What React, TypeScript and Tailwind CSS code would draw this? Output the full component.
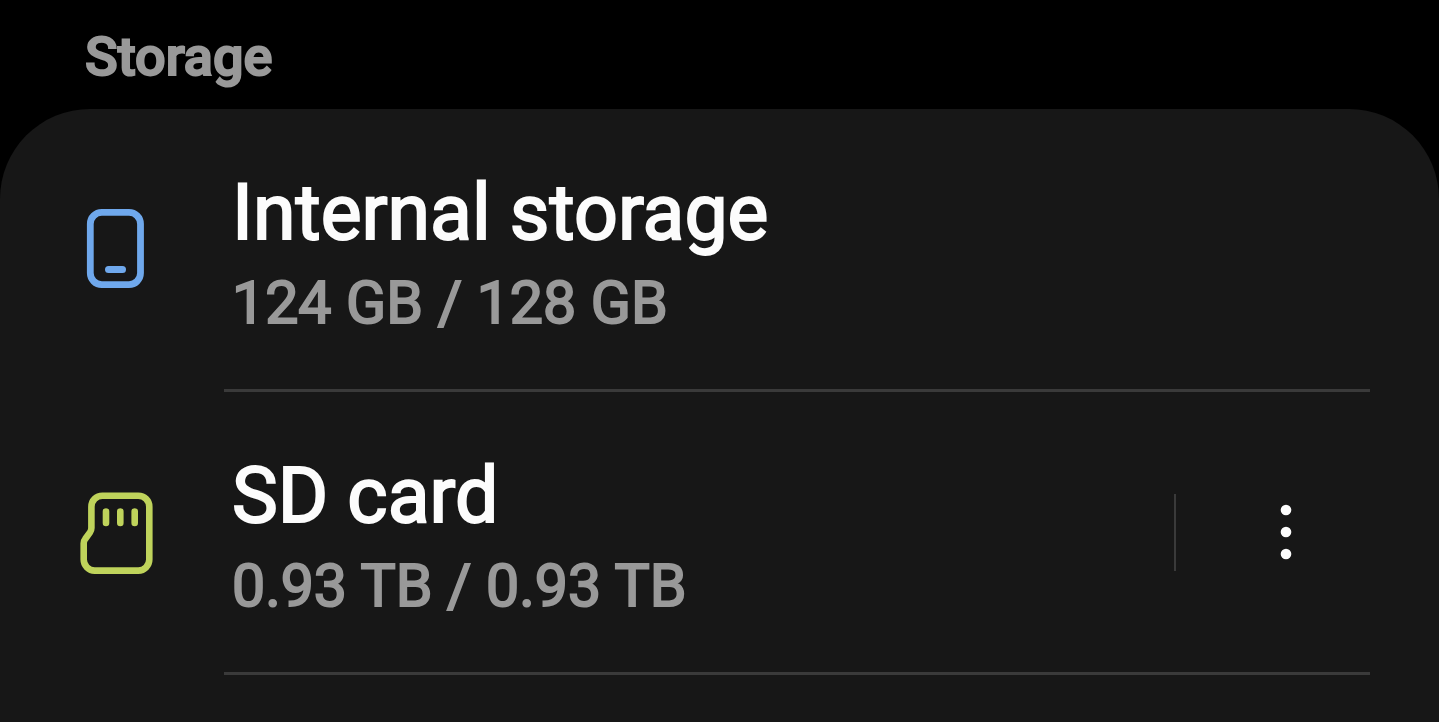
import type { ReactNode } from 'react'

interface IStorageVolume {
  name: string
  usage: string
  icon: ReactNode
  hasMenu?: boolean
}

const volumes: IStorageVolume[] = [
  { name: 'Internal storage', usage: '124 GB / 128 GB', icon: <PhoneIcon /> },
  { name: 'SD card', usage: '0.93 TB / 0.93 TB', icon: <SdCardIcon />, hasMenu: true },
]

export default function App() {
  return (
    <main className="flex min-h-screen flex-col bg-black font-[Roboto,sans-serif]">
      <h1 className="pt-[25px] pb-5 pl-[85px] text-[54px] leading-[64px] font-medium text-[#999999] [-webkit-text-stroke:2px]">
        Storage
      </h1>
      <ul className="grow rounded-t-[90px] bg-[#171717]">
        {volumes.map((volume) => (
          <StorageRow key={volume.name} volume={volume} />
        ))}
      </ul>
    </main>
  )
}

function StorageRow({ volume }: { volume: IStorageVolume }) {
  return (
    <li>
      <div className="flex h-[280px] items-center">
        <div className="flex grow items-center gap-[76px] pl-[76px]">
          {volume.icon}
          <div className="pt-3">
            <h2 className="text-[77px] leading-[96px] font-normal text-[#fcfcfc] [-webkit-text-stroke:2px]">{volume.name}</h2>
            <p className="text-[59px] leading-[84px] font-normal text-[#999999] [-webkit-text-stroke:2px]">{volume.usage}</p>
          </div>
        </div>
        {volume.hasMenu && (
          <div className="mr-[43px] flex items-center">
            <div className="h-[77px] w-0.5 bg-[#3a3a3a]"></div>
            <button type="button" aria-label={`${volume.name} options`} className="flex h-24 w-[220px] items-center justify-center">
              <MoreIcon />
            </button>
          </div>
        )}
      </div>
      <hr className="mr-[69px] ml-[224px] border-t-3 border-[#3a3a3a]" />
    </li>
  )
}

function PhoneIcon() {
  return (
    <svg className="h-[84px] w-20 shrink-0" viewBox="0 0 80 84" fill="none" aria-hidden="true">
      <rect x="14.3" y="5.4" width="50.2" height="72.2" rx="11.5" stroke="#6fa8ec" strokeWidth="6.8" />
      <rect x="29" y="59" width="21" height="7" rx="3.5" fill="#6fa8ec" />
    </svg>
  )
}

function SdCardIcon() {
  return (
    <svg
      className="h-[84px] w-20 shrink-0"
      viewBox="0 0 80 84"
      fill="none"
      stroke="#bfd35b"
      strokeWidth="6.6"
      strokeLinecap="round"
      strokeLinejoin="round"
      aria-hidden="true"
    >
      <path d="M26.5 5.7H62.3a11 11 0 0 1 11 11V69.6a11 11 0 0 1-11 11H18.7a11 11 0 0 1-11-11V53.5a7 7 0 0 1 1.5-4.5L14 42.3a7 7 0 0 0 1.4-4.3V16.7a11 11 0 0 1 11-11Z" />
      <path d="M30 21.5V33M44.3 21.5V33M58.7 21.5V33" />
    </svg>
  )
}

function MoreIcon() {
  return (
    <svg className="h-14 w-3" viewBox="0 0 12 56" fill="#fcfcfc" aria-hidden="true">
      <circle cx="6" cy="6" r="5.3" />
      <circle cx="6" cy="28" r="5.3" />
      <circle cx="6" cy="50" r="5.3" />
    </svg>
  )
}
